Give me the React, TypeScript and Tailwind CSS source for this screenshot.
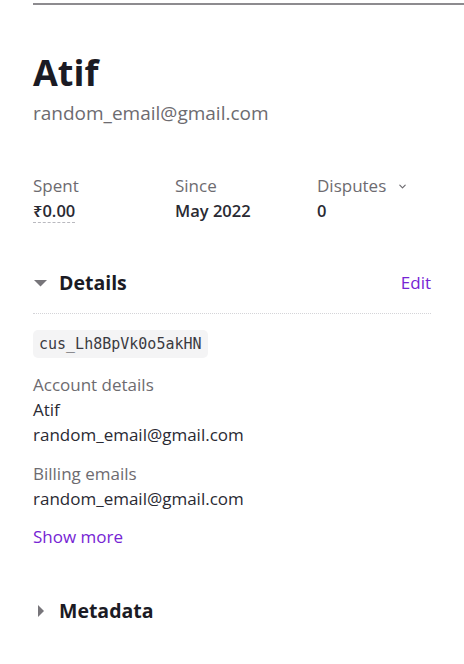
import React from 'react';

const font = { fontFamily: '"Open Sans", "Noto Sans", sans-serif' };

function Stat({ label, value, dashed, chevron }: { label: string; value: string; dashed?: boolean; chevron?: boolean }) {
  return (
    <div className="flex flex-col">
      <div className="flex items-center gap-3 text-[17px] leading-[24px] text-[#6d6b70]">
        {label}
        {chevron && (
          <svg className="w-[9px] h-[9px] mt-[1px]" viewBox="0 0 10 10" fill="none" stroke="#6d6b70" strokeWidth={1.3}>
            <path d="M2 3.5l3 3 3-3" strokeLinecap="round" strokeLinejoin="round" />
          </svg>
        )}
      </div>
      <div className="mt-[1px] text-[16.5px] leading-[24px] font-semibold text-[#2a2a33]">
        <span className={dashed ? 'border-b border-dashed border-[#b9b9bf]' : ''}>{value}</span>
      </div>
    </div>
  );
}

export default function App() {
  return (
    <div className="w-[464px] h-[664px] bg-white overflow-hidden" style={font}>
      <div className="ml-[33px] mt-[3px] h-[1.5px] bg-[#8d8b8f]" />
      <div className="px-[33px]">
        <h1 className="mt-[46px] text-[36px] leading-[44px] font-bold text-[#1b1b24]">Atif</h1>
        <p className="mt-[5px] text-[19px] leading-[26px] text-[#6d6b70]">random_email@gmail.com</p>

        <div className="mt-[48px] grid grid-cols-[142px_142px_1fr]">
          <Stat label="Spent" value="₹0.00" dashed />
          <Stat label="Since" value="May 2022" />
          <Stat label="Disputes" value="0" chevron />
        </div>

        <div className="mt-[47px] flex items-center justify-between">
          <div className="flex items-center">
            <svg className="w-[13px] h-[8px] ml-[1px] mr-[12px]" viewBox="0 0 13 8">
              <path d="M0 1h13L6.5 7.5z" fill="#77757a" />
            </svg>
            <span className="text-[19.5px] leading-[26px] font-bold text-[#1b1b24]">Details</span>
          </div>
          <button className="text-[17px] leading-[26px] font-medium text-[#7624d4]">Edit</button>
        </div>
        <div className="mt-[17px] border-t border-dotted border-[#d4d4d8]" />

        <div className="mt-[16px] inline-block rounded-[5px] bg-[#f4f4f5] px-[6px] py-[3px] text-[15px] leading-[22px] text-[#3b3b42]" style={{ fontFamily: '"DejaVu Sans Mono", monospace' }}>
          cus_Lh8BpVk0o5akHN
        </div>

        <div className="mt-[14px] text-[17px] leading-[25px]">
          <div className="text-[#6d6b70]">Account details</div>
          <div className="text-[#2a2a33]">Atif</div>
          <div className="text-[#2a2a33]">random_email@gmail.com</div>
        </div>

        <div className="mt-[14px] text-[17px] leading-[25px]">
          <div className="text-[#6d6b70]">Billing emails</div>
          <div className="text-[#2a2a33]">random_email@gmail.com</div>
        </div>

        <div className="mt-[13px] text-[17px] leading-[26px] font-medium text-[#7624d4]">Show more</div>

        <div className="mt-[48px] flex items-center">
          <svg className="w-[8px] h-[12px] ml-[4px] mr-[14px]" viewBox="0 0 8 12">
            <path d="M1 0v12l6-6z" fill="#77757a" />
          </svg>
          <span className="text-[19.5px] leading-[26px] font-bold text-[#1b1b24]">Metadata</span>
        </div>
      </div>
    </div>
  );
}
